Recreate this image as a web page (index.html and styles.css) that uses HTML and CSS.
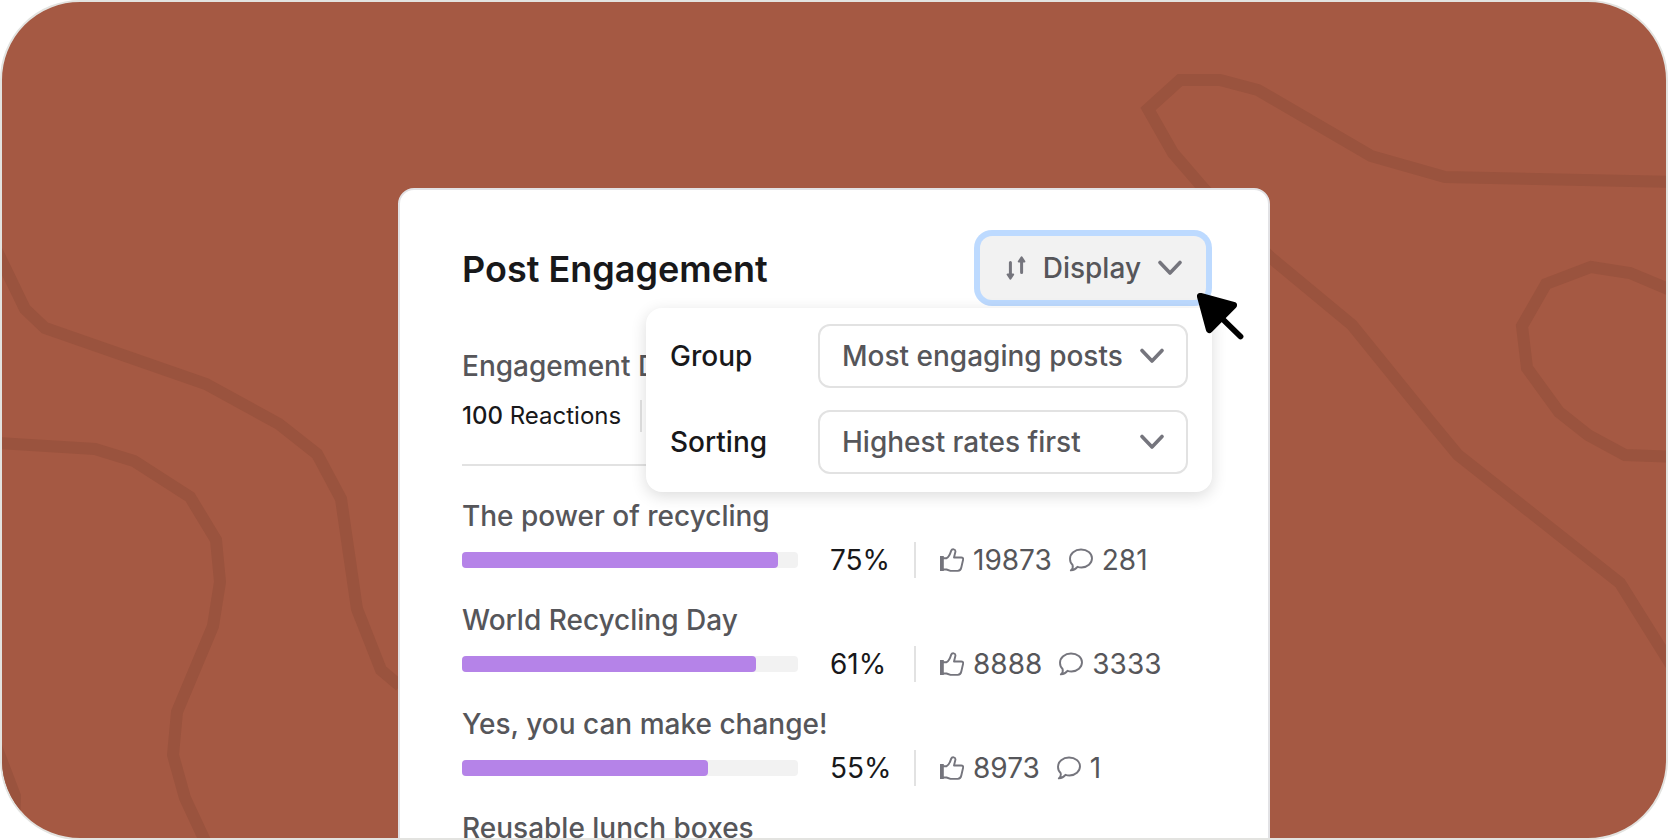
FILE: index.html
```html
<!DOCTYPE html>
<html lang="en">
<head>
    <meta charset="UTF-8">
    <meta name="viewport" content="width=device-width, initial-scale=1.0">
    <title>Post Engagement</title>
    <link rel="stylesheet" href="styles.css">
</head>
<body>
    <!-- shared icons -->
    <svg class="sprite" aria-hidden="true">
        <symbol id="icon-chevron" viewBox="0 0 24 24">
            <path d="M2 6.5 12 17 22 6.5" fill="none" stroke="currentColor" stroke-width="3.6" stroke-linecap="round" stroke-linejoin="round"/>
        </symbol>
        <symbol id="icon-like" viewBox="0 0 24 24">
            <path d="M0 8h3.8v15H0z" fill="currentColor"/>
            <path d="M3 10.2h3.6C9 9 10 6.5 11.2 2.6c.8-2 4.6-1.8 4.2 1.2L14 9.5h7.2c1.6 0 2.2 1 1.9 2.3l-1.8 7.7c-.4 2-1.8 3.2-3.5 3.4h-7.3l-4-1.4H3" fill="none" stroke="currentColor" stroke-width="1.9" stroke-linejoin="round"/>
        </symbol>
        <symbol id="icon-comment" viewBox="0 0 24 24">
            <path d="M1.8 22.4C3.5 21 4.2 19 3.6 17 1.8 15.4 1 13.2 1 10.8 1 5.6 5.8 1.500 12 1.500s11 3.800 11 8.800-4.600 9.200-10.500 9.200c-1.600 0-2.800-.2-4-.7-1.700 2.200-4.200 3.300-6.700 3.600z" fill="none" stroke="currentColor" stroke-width="1.9" stroke-linejoin="round"/>
        </symbol>
    </svg>

    <div class="frame">
        <svg class="pattern" viewBox="2 2 1664 836" preserveAspectRatio="xMidYMid slice" aria-hidden="true">
            <path d="M-4 249 25 309 45 328 206 384 279 424 317 454 341 499 357 609 381 670 400 686"/>
            <path d="M-4 443 95 449 134 461 190 497 216 540 220 582 213 626 177 712 173 755 185 798 213 858"/>
            <path d="M-4 746 15 796 14 830"/>
            <path d="M1680 182 1445 177 1371 156 1258 90 1220 80H1180L1148 109 1173 153 1204 189 1270 257 1352 325 1429 420 1458 455 1620 583 1680 679"/>
            <path d="M1680 294 1630 273 1591 267 1546 284 1522 326 1527 368 1559 412 1588 435 1625 455 1680 457"/>
        </svg>

        <main class="card">
            <header class="card-header">
                <h1>Post Engagement</h1>
                <div class="display">
                    <button type="button" class="display-btn" aria-expanded="true" aria-controls="displayMenu">
                        <svg class="sort-icon" viewBox="0 0 20 28" aria-hidden="true">
                            <path d="M4.4 8.5V22M15.6 6V18.5" stroke="currentColor" stroke-width="3" stroke-linecap="round"/>
                            <path d="M1.6 20.5H7.2L4.4 24.6zM12.8 7.5H18.4L15.6 3.4z" fill="currentColor" stroke="currentColor" stroke-width="2" stroke-linejoin="round"/>
                        </svg>
                        Display
                        <svg class="icon" aria-hidden="true"><use href="#icon-chevron"/></svg>
                    </button>
                    <div class="menu" id="displayMenu">
                        <label for="group">Group</label>
                        <div class="select">
                            <select id="group">
                                <option>Most engaging posts</option>
                            </select>
                            <svg class="icon" aria-hidden="true"><use href="#icon-chevron"/></svg>
                        </div>
                        <label for="sorting">Sorting</label>
                        <div class="select">
                            <select id="sorting">
                                <option>Highest rates first</option>
                            </select>
                            <svg class="icon" aria-hidden="true"><use href="#icon-chevron"/></svg>
                        </div>
                    </div>
                    <svg class="cursor" viewBox="0 0 48 48" aria-hidden="true">
                        <path d="M4.5 4.5 37.5 13.4 13.4 37.5z" stroke-width="7"/>
                        <path d="M25 25.5 44.5 44.5" stroke-width="5.8"/>
                    </svg>
                </div>
            </header>

            <section class="summary">
                <h2>Engagement Data</h2>
                <p class="totals"><span class="total"><b>100</b> Reactions</span></p>
            </section>

            <ul class="posts">
                <li>
                    <h3>The power of recycling</h3>
                    <div class="stats">
                        <div class="bar"><div class="bar-fill" style="width: 94%"></div></div>
                        <span class="rate">75%</span>
                        <span class="count"><svg class="icon" aria-hidden="true"><use href="#icon-like"/></svg>19873</span>
                        <span class="count"><svg class="icon" aria-hidden="true"><use href="#icon-comment"/></svg>281</span>
                    </div>
                </li>
                <li>
                    <h3>World Recycling Day</h3>
                    <div class="stats">
                        <div class="bar"><div class="bar-fill" style="width: 87.5%"></div></div>
                        <span class="rate">61%</span>
                        <span class="count"><svg class="icon" aria-hidden="true"><use href="#icon-like"/></svg>8888</span>
                        <span class="count"><svg class="icon" aria-hidden="true"><use href="#icon-comment"/></svg>3333</span>
                    </div>
                </li>
                <li>
                    <h3>Yes, you can make change!</h3>
                    <div class="stats">
                        <div class="bar"><div class="bar-fill" style="width: 73.2%"></div></div>
                        <span class="rate">55%</span>
                        <span class="count"><svg class="icon" aria-hidden="true"><use href="#icon-like"/></svg>8973</span>
                        <span class="count"><svg class="icon" aria-hidden="true"><use href="#icon-comment"/></svg>1</span>
                    </div>
                </li>
                <li>
                    <h3>Reusable lunch boxes</h3>
                </li>
            </ul>
        </main>
    </div>
</body>
</html>
```

FILE: styles.css
```css
* {
    box-sizing: border-box;
    margin: 0;
    padding: 0;
}

body {
    background: #fff;
    color: #18181a;
    font-family: "Inter", sans-serif;
    font-size: 28px;
    line-height: 36px;
}

.sprite {
    display: none;
}

.icon {
    width: 24px;
    height: 24px;
    flex: none;
    color: #75757d;
}

.frame {
    position: relative;
    height: 100vh;
    padding: 186px 24px 0;
    overflow: hidden;
    background: #a55943;
    border: 2px solid #e3e3e0;
    border-radius: 80px;
}

/* contour lines behind the card */
.pattern {
    position: absolute;
    inset: 0;
    width: 100%;
    height: 100%;
}

.pattern path {
    fill: none;
    stroke: #9a533e;
    stroke-width: 12;
}

.card {
    position: relative;
    max-width: 872px;
    margin: 0 auto;
    padding: 46px 62px;
    background: #fff;
    border: 2px solid #e2e2e5;
    border-radius: 16px;
}

.card-header {
    display: flex;
    align-items: center;
    justify-content: space-between;
}

h1 {
    padding-top: 2px;
    font-size: 36px;
    font-weight: 600;
    line-height: 44px;
}

/* display button and its menu */
.display {
    position: relative;
    z-index: 1;
}

.display-btn {
    display: flex;
    align-items: center;
    gap: 17px;
    height: 64px;
    padding: 0 24px 0 26px;
    background: #f2f2f2;
    border: none;
    border-radius: 12px;
    box-shadow: 0 0 0 6px #bddaff;
    color: #56565a;
    font: inherit;
    font-weight: 500;
}

.sort-icon {
    width: 20px;
    height: 28px;
    color: #75757d;
}

.menu {
    position: absolute;
    top: 72px;
    right: -6px;
    display: grid;
    grid-template-columns: 1fr 370px;
    align-items: center;
    gap: 22px;
    width: 566px;
    padding: 16px 24px 18px;
    background: #fff;
    border-radius: 16px;
    box-shadow: 0 4px 16px rgba(0, 0, 0, 0.14);
    font-weight: 500;
}

.select {
    display: grid;
    align-items: center;
}

.select select,
.select .icon {
    grid-area: 1 / 1;
}

.select .icon {
    justify-self: end;
    margin-right: 24px;
    pointer-events: none;
}

select {
    -webkit-appearance: none;
    appearance: none;
    width: 100%;
    height: 64px;
    padding: 0 60px 0 22px;
    background: #fff;
    border: 2px solid #e2e2e2;
    border-radius: 12px;
    color: #56565a;
    font: inherit;
}

.cursor {
    position: absolute;
    top: 56px;
    right: -38px;
    width: 48px;
    height: 48px;
}

.cursor path {
    fill: #000;
    stroke: #000;
    stroke-linecap: round;
    stroke-linejoin: round;
}

.summary {
    margin-top: 48px;
    padding-bottom: 32px;
    border-bottom: 2px solid #e2e2e2;
}

h2,
h3 {
    color: #56565a;
    font-size: 28px;
    font-weight: 500;
}

.totals {
    display: flex;
    margin-top: 16px;
    font-size: 24px;
    line-height: 32px;
}

.total {
    padding-right: 19px;
    border-right: 2px solid #e2e2e2;
}

.total b {
    font-weight: 500;
}

.posts {
    display: flex;
    flex-direction: column;
    gap: 24px;
    margin-top: 32px;
    list-style: none;
}

.stats {
    display: flex;
    align-items: center;
    margin-top: 8px;
}

.bar {
    width: 336px;
    height: 16px;
    background: #f2f2f2;
    border-radius: 4px;
}

.bar-fill {
    height: 100%;
    background: #b583e8;
    border-radius: 4px;
}

.rate {
    width: 86px;
    margin: 0 24px 0 32px;
    border-right: 2px solid #e2e2e2;
}

.count {
    display: flex;
    align-items: center;
    gap: 9px;
    margin-right: 17px;
    color: #56565a;
}
```
